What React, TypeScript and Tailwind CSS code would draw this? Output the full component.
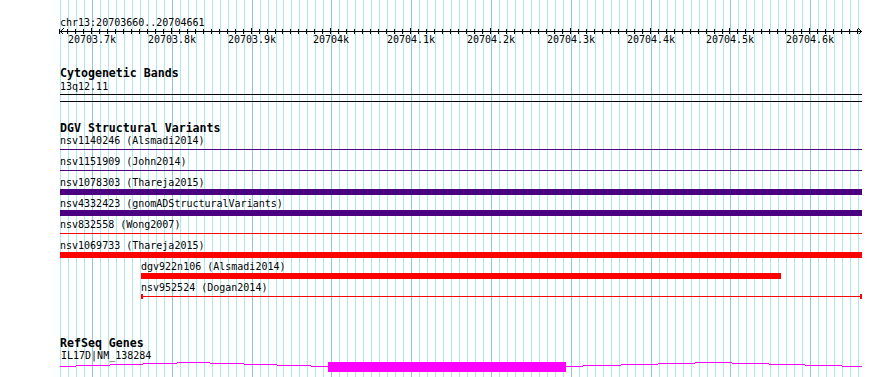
import React from 'react';

const START = 20703660;
const SCALE = 799 / 1001;
const toX = (bp: number) => 60 + (bp - START) * SCALE;

const ticks = Array.from({ length: 101 }, (_, i) => ({
  x: Math.round(toX(START + i * 10)),
  major: (START + i * 10) % 100 === 0,
}));

const labels = [
  '20703.7k', '20703.8k', '20703.9k', '20704k', '20704.1k',
  '20704.2k', '20704.3k', '20704.4k', '20704.5k', '20704.6k',
].map((text, i) => ({ text, x: Math.round(toX(20703700 + i * 100)) }));

// intron hat steps [x1, x2, y] in page coordinates
const intronSteps: [number, number, number][] = [
  [60, 76, 366], [76, 110, 365], [110, 143, 364], [143, 177, 363], [177, 210, 362],
  [210, 244, 363], [244, 277, 364], [277, 311, 365], [311, 328, 366],
  [566, 583, 366], [583, 621, 365], [621, 658, 364], [658, 695, 363], [695, 732, 362],
  [732, 769, 363], [769, 805, 364], [805, 842, 365], [842, 862, 366],
];

const mono = "font-['DejaVu_Sans_Mono','Liberation_Mono',monospace]";

const Label = ({ children }: { children: React.ReactNode }) => (
  <div className="h-[11px] text-[10px] leading-[11px] text-black whitespace-pre">{children}</div>
);

const Title = ({ children }: { children: React.ReactNode }) => (
  <div className="h-[14px] text-[11.6px] leading-[14px] font-bold text-black whitespace-pre">{children}</div>
);

const App = () => {
  return (
    <div className={`relative w-[890px] h-[377px] overflow-hidden bg-white ${mono}`}>
      {/* grid */}
      <svg className="absolute inset-0" width={890} height={377} shapeRendering="crispEdges">
        {ticks.map((t) => (
          <rect key={t.x} x={t.x} y={0} width={1} height={377} fill={t.major ? '#8cc6ea' : '#ade7ef'} />
        ))}
      </svg>

      <div className="relative pt-[17px] pl-[60px] w-[862px]">
        {/* Ruler */}
        <Label>chr13:20703660..20704661</Label>
        <svg className="block -ml-[60px]" width={862} height={6} shapeRendering="crispEdges">
          <rect x={60} y={3} width={802} height={1} fill="#000" />
          {ticks.map((t) => (
            <rect key={t.x} x={t.x - 1} y={t.major ? 0 : 1} width={1} height={t.major ? 6 : 5} fill="#000" />
          ))}
          <path d="M63.5 0.5 L60.5 3.5 L63.5 6.5 M858.5 0.5 L861.5 3.5 L858.5 6.5" stroke="#000" fill="none" />
        </svg>
        <div className="relative h-[11px] -ml-[60px]">
          {labels.map((l) => (
            <span
              key={l.text}
              className="absolute top-0 -translate-x-1/2 text-[10px] leading-[11px] text-black whitespace-pre"
              style={{ left: l.x }}
            >
              {l.text}
            </span>
          ))}
        </div>

        {/* Cytogenetic Bands */}
        <div className="mt-[21px]">
          <Title>Cytogenetic Bands</Title>
          <div className="mt-[1px]">
            <Label>13q12.11</Label>
          </div>
          <div className="mt-[2px] h-[8px] border-y border-black" />
        </div>

        {/* DGV Structural Variants */}
        <div className="mt-[19px]">
          <Title>DGV Structural Variants</Title>

          <div className="h-[21px]">
            <Label>nsv1140246 (Alsmadi2014)</Label>
            <div className="mt-[1px] h-[6px] pt-[2px]">
              <div className="h-[1px] bg-[#4b0082]" />
            </div>
          </div>
          <div className="h-[21px]">
            <Label>nsv1151909 (John2014)</Label>
            <div className="mt-[1px] h-[6px] pt-[2px]">
              <div className="h-[1px] bg-[#4b0082]" />
            </div>
          </div>
          <div className="h-[21px]">
            <Label>nsv1078303 (Thareja2015)</Label>
            <div className="mt-[1px] h-[6px] bg-[#4b0082]" />
          </div>
          <div className="h-[21px]">
            <Label>nsv4332423 (gnomADStructuralVariants)</Label>
            <div className="mt-[1px] h-[6px] bg-[#4b0082]" />
          </div>
          <div className="h-[21px]">
            <Label>nsv832558 (Wong2007)</Label>
            <div className="mt-[1px] h-[6px] pt-[2px]">
              <div className="h-[1px] bg-[#ff0000]" />
            </div>
          </div>
          <div className="h-[21px]">
            <Label>nsv1069733 (Thareja2015)</Label>
            <div className="mt-[1px] h-[6px] bg-[#ff0000]" />
          </div>
          <div className="h-[21px] pl-[81px]">
            <Label>dgv922n106 (Alsmadi2014)</Label>
            <div className="mt-[1px] h-[6px] w-[640px] bg-[#ff0000]" />
          </div>
          <div className="h-[21px] pl-[81px]">
            <Label>nsv952524 (Dogan2014)</Label>
            <div className="mt-[1px] h-[6px] flex items-start">
              <div className="w-[2px] h-[5px] bg-[#ff0000]" />
              <div className="flex-1 h-[1px] mt-[2px] bg-[#ff0000]" />
              <div className="w-[2px] h-[5px] bg-[#ff0000]" />
            </div>
          </div>
        </div>

        {/* RefSeq Genes */}
        <div className="mt-[33px]">
          <Title>RefSeq Genes</Title>
          <div className="pl-[1px]">
            <Label>IL17D|NM_138284</Label>
          </div>
          <svg className="block -ml-[60px]" width={862} height={16} shapeRendering="crispEdges">
            {intronSteps.map(([x1, x2, y]) => (
              <rect key={x1} x={x1} y={y - 361} width={x2 - x1} height={1} fill="#ff00ff" />
            ))}
            <rect x={328} y={1} width={238} height={10} fill="#ff00ff" />
          </svg>
        </div>
      </div>
    </div>
  );
};

export default App;
